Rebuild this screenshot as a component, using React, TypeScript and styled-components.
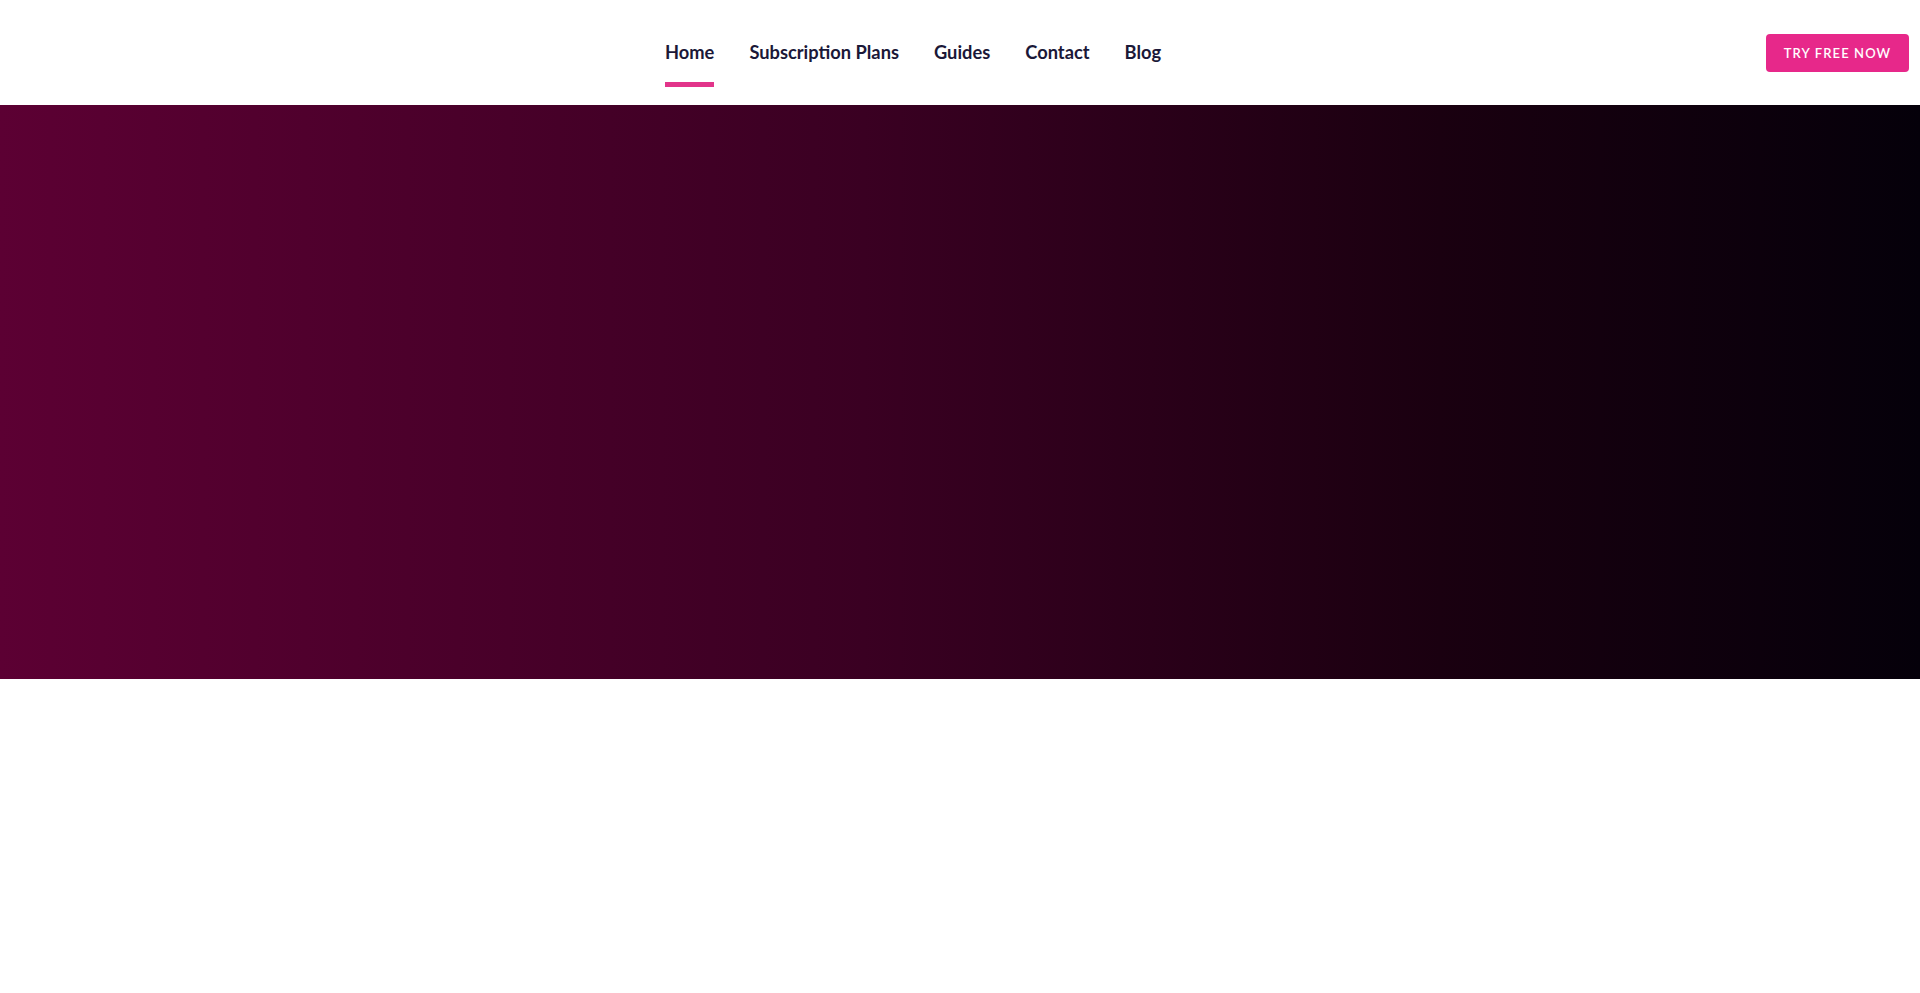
import React from "react";
import styled, { createGlobalStyle } from "styled-components";

const GlobalStyle = createGlobalStyle`
  html, body {
    margin: 0;
    padding: 0;
    background: #ffffff;
  }
  body {
    font-family: "Lato", "Open Sans", sans-serif;
  }
  * {
    box-sizing: border-box;
  }
`;

const navItems = ["Home", "Subscription Plans", "Guides", "Contact", "Blog"];

export default function App() {
  return (
    <>
      <GlobalStyle />
      <Page>
        <Header>
          <LogoSlot />
          <Nav>
            {navItems.map((item, i) => (
              <NavLink key={item} href="#" $active={i === 0}>
                {item}
              </NavLink>
            ))}
          </Nav>
          <Cta href="#">TRY FREE NOW</Cta>
        </Header>
        <Hero />
      </Page>
    </>
  );
}

const Page = styled.div`
  width: 100%;
  min-height: 993px;
  background: #ffffff;
`;

const Header = styled.header`
  display: flex;
  align-items: center;
  height: 105px;
  padding-right: 11px;
  background: #ffffff;
`;

const LogoSlot = styled.div`
  width: 665px;
  flex-shrink: 0;
`;

const Nav = styled.nav`
  display: flex;
  align-items: stretch;
  gap: 35px;
  height: 100%;
`;

const NavLink = styled.a<{ $active?: boolean }>`
  position: relative;
  display: flex;
  align-items: center;
  padding-bottom: 2px;
  font-family: "Lato", sans-serif;
  font-size: 18.3px;
  font-weight: 700;
  color: #1b1838;
  text-decoration: none;
  white-space: nowrap;

  &::after {
    content: "";
    position: absolute;
    left: 0;
    right: 0;
    top: 82px;
    height: 5px;
    background: #e2348a;
    display: ${(p) => (p.$active ? "block" : "none")};
  }
`;

const Cta = styled.a`
  margin-left: auto;
  display: flex;
  align-items: center;
  justify-content: center;
  width: 143px;
  height: 38px;
  border-radius: 4px;
  background: #e7288a;
  color: #ffffff;
  font-family: "Lato", sans-serif;
  font-size: 13px;
  font-weight: 600;
  letter-spacing: 1.1px;
  text-decoration: none;
`;

const Hero = styled.section`
  height: 574px;
  background: linear-gradient(90deg, #5c0033 0%, #3a0022 45%, #1a0010 75%, #05000a 100%);
`;
